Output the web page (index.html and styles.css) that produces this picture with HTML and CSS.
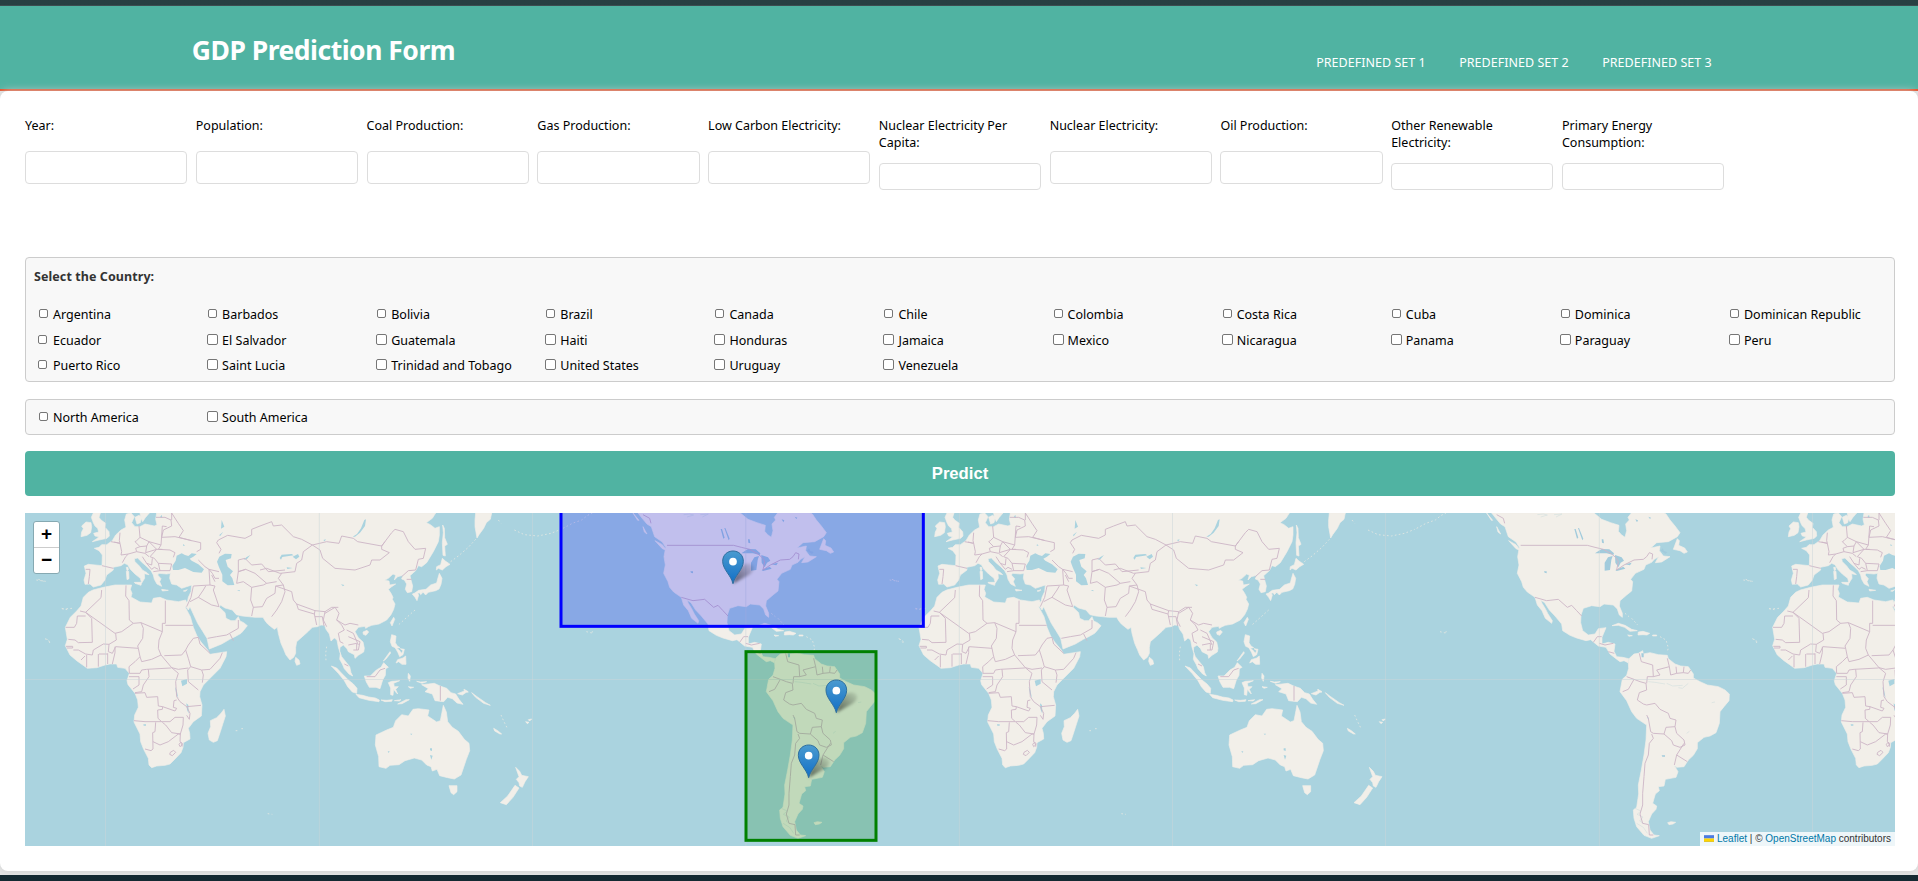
FILE: index.html
```html
<!DOCTYPE html>
<html lang="en">
<head>
<meta charset="utf-8">
<title>GDP Prediction Form</title>
<link rel="stylesheet" href="styles.css">
</head>
<body>
<div class="page">
<header class="header">
  <div class="header-inner">
    <h1 class="title">GDP Prediction Form</h1>
    <nav class="nav"><a>PREDEFINED SET 1</a><a>PREDEFINED SET 2</a><a>PREDEFINED SET 3</a></nav>
  </div>
</header>
<main class="container">
  <form class="form">
    <div class="fields">
      <div class="field"><label>Year:</label><input type="text"></div>
      <div class="field"><label>Population:</label><input type="text"></div>
      <div class="field"><label>Coal Production:</label><input type="text"></div>
      <div class="field"><label>Gas Production:</label><input type="text"></div>
      <div class="field"><label>Low Carbon Electricity:</label><input type="text"></div>
      <div class="field tall"><label>Nuclear Electricity Per<br>Capita:</label><input type="text"></div>
      <div class="field"><label>Nuclear Electricity:</label><input type="text"></div>
      <div class="field"><label>Oil Production:</label><input type="text"></div>
      <div class="field tall"><label>Other Renewable<br>Electricity:</label><input type="text"></div>
      <div class="field tall"><label>Primary Energy<br>Consumption:</label><input type="text"></div>
    </div>
    <section class="box countries">
      <h2 class="box-title">Select the Country:</h2>
      <div class="checks">
        <label><input type="checkbox">Argentina</label><label><input type="checkbox">Barbados</label><label><input type="checkbox">Bolivia</label><label><input type="checkbox">Brazil</label><label><input type="checkbox">Canada</label><label><input type="checkbox">Chile</label><label><input type="checkbox">Colombia</label><label><input type="checkbox">Costa Rica</label><label><input type="checkbox">Cuba</label><label><input type="checkbox">Dominica</label><label><input type="checkbox">Dominican Republic</label>
        <label><input type="checkbox">Ecuador</label><label><input type="checkbox">El Salvador</label><label><input type="checkbox">Guatemala</label><label><input type="checkbox">Haiti</label><label><input type="checkbox">Honduras</label><label><input type="checkbox">Jamaica</label><label><input type="checkbox">Mexico</label><label><input type="checkbox">Nicaragua</label><label><input type="checkbox">Panama</label><label><input type="checkbox">Paraguay</label><label><input type="checkbox">Peru</label>
        <label><input type="checkbox">Puerto Rico</label><label><input type="checkbox">Saint Lucia</label><label><input type="checkbox">Trinidad and Tobago</label><label><input type="checkbox">United States</label><label><input type="checkbox">Uruguay</label><label><input type="checkbox">Venezuela</label>
      </div>
    </section>
    <section class="box regions">
      <div class="checks">
        <label><input type="checkbox">North America</label><label class="big"><input type="checkbox">South America</label>
      </div>
    </section>
    <button class="predict" type="button">Predict</button>
  </form>
  <div class="map">
    <svg class="tiles" viewBox="0 9 5610 999" preserveAspectRatio="none">
      <defs>
        <g id="oldworld">
          <path class="land" d="M395,9 L1232,9 1222,25 1204,38 1216,44 1230,55 1243,50 1243,75 1240,95 1225,125 1205,158 1190,170 1180,167 1172,182 1165,188 1155,197 1158,210 1163,228 1160,245 1147,248 1141,238 1145,222 1138,210 1130,207 1134,196 1118,200 1108,210 1112,196 1104,192 1090,205 1079,211 1092,213 1094,225 1112,222 1100,230 1090,238 1098,250 1104,262 1102,268 1110,282 1106,298 1098,314 1085,330 1062,342 1040,346 1030,350 1022,355 1020,349 1000,352 990,365 1000,383 1014,396 1018,415 1016,426 1000,436 990,445 988,434 970,425 966,416 955,405 945,412 944,424 950,440 962,455 974,470 978,488 983,498 972,492 958,476 952,462 944,448 946,430 940,412 936,390 928,384 918,393 913,372 903,358 899,346 888,345 877,350 862,352 850,364 832,380 815,395 812,412 812,430 806,442 795,450 783,435 776,418 768,400 760,370 757,352 748,358 738,350 728,342 720,332 714,322 690,322 652,318 634,314 622,300 600,294 586,285 583,292 600,308 603,325 618,332 630,332 640,320 645,333 656,338 667,347 655,362 648,370 630,380 614,388 590,402 570,410 553,417 546,385 532,362 518,340 504,310 495,290 490,300 480,285 488,272 490,262 498,245 500,225 485,230 470,235 455,225 440,222 434,205 436,190 425,192 402,190 398,195 408,206 404,215 410,229 396,222 388,208 385,195 378,182 366,170 352,158 338,144 328,146 330,155 343,168 352,180 366,188 372,194 358,191 359,205 350,219 346,205 330,192 316,178 308,164 298,160 288,167 264,172 265,180 245,195 240,210 228,225 205,231 195,222 180,223 177,210 183,190 178,168 190,163 231,167 232,135 222,122 208,115 222,112 230,104 245,104 262,92 272,75 288,60 303,52 299,30 304,12 318,9 328,20 320,38 330,50 345,50 360,42 388,48 396,44 392,28Z"/>
          <path class="land" d="M204,240 L235,232 270,225 303,225 320,225 316,238 321,250 318,261 345,276 380,279 385,265 405,262 425,270 460,275 482,270 487,287 480,290 496,320 505,352 516,378 528,396 548,420 555,433 605,425 603,440 585,475 555,505 535,525 525,545 524,560 531,585 529,618 505,635 490,655 494,670 495,687 475,698 474,712 468,728 450,747 435,762 420,766 395,768 380,773 372,765 370,745 356,718 347,695 345,672 327,636 329,615 340,592 338,570 330,550 309,524 306,512 313,490 300,475 278,472 275,462 255,462 240,465 215,473 187,475 172,464 155,452 135,435 121,407 127,388 121,352 136,322 155,303 168,288 175,262 190,247Z"/>
          <path class="land" d="M597,598 L601,618 594,640 586,665 577,692 565,697 553,690 549,670 557,650 556,632 575,623 588,610Z"/>
          <path class="land" d="M205,9 L226,9 222,22 228,30 242,40 240,52 252,65 253,78 246,85 222,90 202,95 215,86 222,80 210,78 206,70 221,66 218,55 210,48 205,38 199,22Z"/>
          <path class="land" d="M183,36 L198,38 200,50 197,68 186,76 168,80 170,66 175,56 170,48Z"/>
          <path class="land" d="M330,22 l12,-6 8,6 -4,16 -10,4Z M345,9 h28 l-12,14 -8,12 -6,-14Z M304,184 l7,0 1,22 -6,3Z M304,172 l5,0 1,8 -4,2Z M328,217 l22,0 -2,9 -18,-6Z M410,238 l20,3 -18,2Z M475,243 l12,-4 -6,5Z"/>
          <path class="land" d="M812,442 l10,8 3,12 -10,4 -5,-12Z M1106,322 l3,6 -8,20 -5,-10Z M1014,366 l12,-5 5,5 -8,10 -8,-3Z"/>
          <path class="land" d="M1253,45 l5,10 1,28 8,20 -8,5 2,30 -7,-2 -2,-38 3,-30Z M1252,145 l9,8 14,10 -12,7 -11,10 -12,-5 -6,5 1,-10 12,-6Z M1243,190 l8,15 -3,18 -6,14 -10,5 -22,5 -8,8 -9,-10 -14,5 -8,-2 10,-7 22,-3 14,-13 18,-6 3,-12Z M1175,247 l6,8 -5,17 -6,-10 -8,-10Z M1183,247 l12,-1 -8,8Z"/>
          <path class="land" d="M1100,374 l13,4 -2,20 6,10 8,5 -10,2 -14,-6 -5,-14Z M1110,412 l12,8 8,10 4,-8 -8,-6 12,2 -4,16 -10,6 -5,-12Z M1142,438 l1,25 -12,0 -10,-8 -8,4 5,-10 16,-5Z M1095,425 l-20,28 8,-6 14,-18Z"/>
          <path class="land" d="M1076,458 l14,14 -8,4 -1,20 -8,14 -8,26 -12,-4 -20,0 -9,-16 -6,-18 18,0 18,-18 14,-8Z"/>
          <path class="land" d="M919,468 L935,474 952,492 970,510 985,522 996,535 995,550 982,546 968,530 958,512 940,490Z M993,553 l20,3 18,5 20,3 12,6 -1,5 -30,-4 -30,-8Z M1068,570 l18,1 16,-2 -2,5 -20,1Z M1108,572 l20,-3 -5,4Z M1118,582 l25,-13 10,0 -22,12Z"/>
          <path class="land" d="M1090,518 l10,-4 24,-2 -18,8 2,10 12,0 -8,8 6,14 -6,-6 -6,-8 -2,18 -7,-2 0,-20Z M1150,490 l6,8 -2,16 -5,-10Z M1150,530 l16,2 -10,3Z M1175,514 l12,2 18,-1 -14,5Z"/>
          <path class="land" d="M1190,524 L1210,522 1228,520 1245,528 1265,535 1278,548 1292,552 1302,568 1314,583 1296,579 1282,566 1268,562 1256,575 1230,572 1222,552 1200,545 1210,536Z M1298,551 l22,-9 8,2 -16,11Z M1318,538 l12,8 -4,1 -10,-7Z M1340,548 l16,12 26,18 14,8 -20,-6 -24,-18Z"/>
          <path class="land" d="M1255,586 L1264,606 1268,635 1282,652 1300,664 1318,688 1332,700 1334,722 1324,748 1308,795 1288,807 1268,803 1244,797 1236,778 1222,783 1218,770 1205,765 1190,750 1168,744 1140,752 1122,764 1095,766 1083,775 1062,770 1061,740 1051,705 1053,675 1085,660 1105,652 1112,632 1130,614 1150,618 1164,598 1180,596 1212,600 1208,618 1235,636 1246,632Z"/>
          <path class="land" d="M1272,827 l24,0 0,18 -10,9 -8,-6Z M1472,772 L1484,784 1490,796 1510,800 1500,815 1492,832 1484,828 1482,818 1474,808 1482,800Z M1470,826 L1482,834 1464,862 1444,884 1426,878 1448,858Z M1406,655 l12,7 12,10 -5,0 -16,-9Z M1502,635 l10,2 -5,4Z M1510,629 l10,-2 -6,6Z"/>
          <path class="land" d="M1352,9 L1400,9 1396,28 1384,38 1376,55 1362,74 1356,84 1350,50 1350,30Z"/>
          <path class="dots" d="M1352,88 L1330,112 1300,138 1270,160 M1420,30 l8,10 M1468,60 l30,14 40,4 40,-8 30,-12 M1428,615 l8,18 10,20 M728,911 l14,2 M632,662 l6,0 M649,656 l6,0 M905,410 l-3,20 1,22 M1170,300 L1120,345 M110,295 l20,5 M60,386 l20,12 M40,208 l22,8 M1684,365 l16,4"/>
          <path class="water" d="M480,135 L470,130 455,137 452,152 442,168 444,180 460,180 480,174 505,186 530,188 537,178 520,163 500,152 494,146 505,140 515,132 500,130 490,138Z"/>
          <path class="water" d="M583,140 L600,131 620,132 618,145 602,150 608,170 624,184 615,195 622,205 628,225 608,226 592,214 592,194 582,172 576,155Z"/>
          <path class="water" d="M983,80 L996,72 1008,55 1018,30 1023,28 1020,48 1005,68 990,80Z M764,144 l6,-10 30,-2 6,4 -34,5 -4,8Z M803,140 l16,-8 4,8 -10,8Z M468,512 l18,-5 0,14 -14,8Z M484,580 l6,5 1,26 -5,-12Z M450,530 l5,10 5,25 -6,-12Z M785,172 l18,2 -16,3Z M656,150 l8,-8 12,-7 -10,12Z M590,30 l8,20 -10,6Z M475,102 l5,5 -6,0Z M948,223 l10,2 -4,4Z M636,240 l8,0 0,4Z M895,90 l8,-2 -4,6Z M583,75 l12,-10 -10,14Z M405,22 l5,-8 2,10Z"/>
          <path class="water" d="M1215,715 l6,0 0,8 -6,-2Z M1215,735 l8,2 -4,12Z M355,643 h8 v4 h-7Z M1088,724 h6 l-3,5Z M1155,671 h7 l-3,4Z M486,425 l-2,14"/>
          <path class="border" d="M182,307 L165,303 M182,307 L228,263 230,240 M182,307 L270,370 290,365 325,340 313,330 312,272 302,258 303,226 M325,340 L348,338 412,365 412,340 421,340 421,272 M421,346 H504 M182,318 H157 L155,340 148,352 H122 M200,325 L202,397 160,398 150,390 130,388 M200,325 L182,307 M348,338 L355,355 353,385 338,408 340,415 M412,365 L402,390 400,415 408,435 380,448 350,455 345,440 340,415 272,410 262,430 250,425 252,403 235,402 205,420 202,435 182,432 160,420 145,420 M123,409 h20 l0,5 h-18 M272,370 L274,390 252,403 M270,410 V428 L262,462 M248,430 V462 M222,432 h26 M220,432 V470 M185,435 V472 M168,450 l12,-12 M345,440 L330,455 312,470 313,490 H345 L350,480 365,478 437,474 440,473 M408,435 L440,473 460,478 490,474 M418,437 L470,435 482,420 490,405 505,385 520,382 M482,420 L490,445 497,470 530,480 555,478 585,445 592,428 M497,470 L488,480 490,515 520,540 M530,480 L535,495 532,518 M520,382 L525,402 555,430 M440,473 L460,490 452,515 455,560 465,575 485,590 528,586 M330,550 L360,548 365,562 398,560 400,588 413,590 412,598 398,600 399,625 410,635 360,635 327,632 M370,478 L372,500 355,525 350,545 330,548 M312,500 h30 v25 l-18,12 M413,590 L450,603 455,595 445,592 447,572 455,570 M410,635 H435 L450,622 475,622 474,645 466,672 440,668 422,645 412,637 M392,637 L390,665 383,668 384,717 378,722 360,717 M384,695 L405,705 430,695 460,672 466,672 465,695 472,700 471,710 M436,727 l10,-6 6,6 -10,10 -8,-4Z M462,703 l5,-6 4,8 -6,5Z M485,590 l10,20 -2,18 -8,-12"/>
          <path class="border" d="M182,178 L195,178 193,200 190,222 M231,167 L265,175 M258,95 L285,100 290,125 288,135 310,132 335,125 360,130 372,140 M285,68 L283,92 285,100 M342,48 L345,82 335,92 330,95 345,110 365,108 372,95 408,105 412,48 M285,100 L268,96 M345,82 L372,95 M310,132 L302,140 292,158 M335,125 L332,115 345,110 M365,108 L362,128 M372,95 L395,118 362,128 M408,105 L400,118 395,118 375,140 388,145 400,160 440,162 M400,118 L435,120 450,128 445,142 M400,118 L412,118 M400,160 L405,182 385,185 M405,182 H435 L440,162 M352,140 L365,160 380,165 382,145 M365,160 L380,178 388,172 400,178 M393,22 L420,22 438,30 440,48 415,60 410,82 450,80 M440,30 V9 M412,48 L425,50 M440,9 L460,40 475,62 462,82 500,92 527,98 527,118 515,125 M500,92 L450,80 M520,150 L540,170 552,178 582,185 M552,178 L555,225 505,228 498,262 485,290 M555,225 L570,228 565,240 582,290 560,285 520,262 495,275 M520,262 L535,240 542,228 M552,178 L562,190 570,205 582,205 M560,195 l10,20 M582,130 L588,118 575,98 580,90 608,76 660,85 680,75 680,58 705,48 740,35 745,48 770,45 805,80 830,88 862,105 835,125 830,150 815,160 810,185 765,190 725,175 705,180 M862,105 L905,95 942,100 950,78 985,85 998,95 1070,108 1080,95 M862,105 L885,120 893,145 930,175 990,180 1035,165 1040,150 1065,150 1093,128 1070,118 1070,108 1100,68 1110,58 1135,65 1150,95 1170,118 1202,115 1195,145 1180,148 1172,180 1150,182 1130,200 M1145,208 h15 M640,150 V185 L662,178 690,190 725,220 755,215 M640,150 L660,145 680,165 710,162 730,185 780,180 M662,178 L640,185 635,220 M635,220 L655,215 680,232 715,225 725,220 M680,232 L677,270 685,292 680,318 M685,292 L712,290 725,265 750,250 752,228 775,225 760,205 770,190 M752,228 L800,245 805,270 815,282 870,302 900,305 920,292 940,292 M775,225 L780,245 770,275 755,300 740,320 M815,282 L820,298 868,312 870,302 M868,312 L875,345 M870,320 h22 l5,28 M900,305 L895,330 905,350 M900,310 L930,292 942,310 935,330 950,345 958,360 M935,330 L960,345 975,340 1000,345 M958,360 L940,370 945,395 955,400 M965,360 L985,370 1000,405 M970,380 L1005,395 1000,420 985,420 M970,405 l25,-5 0,20 M548,385 L575,380 605,375 640,355 640,330 M615,372 l10,20 M958,462 l12,6 M1025,500 L1050,500 1065,480 1080,475 M1246,528 V572"/>
        </g>
        <g id="newworld">
          <path class="land" d="M35,9 L50,28 62,42 75,50 85,80 108,96 118,112 113,140 117,165 112,190 125,215 130,232 142,246 165,262 172,285 186,302 196,325 215,340 217,332 204,312 196,296 186,280 182,270 194,278 208,300 225,318 245,342 248,362 270,376 290,384 318,392 332,389 355,408 378,412 390,432 408,446 420,455 432,452 444,458 446,446 428,442 410,440 402,424 405,402 385,397 366,402 366,382 370,372 378,353 355,356 345,372 325,375 308,362 302,338 303,315 310,295 335,287 360,290 372,282 400,285 412,297 418,315 427,322 427,310 418,288 420,272 440,255 455,243 458,215 452,208 466,190 492,178 497,165 515,157 523,148 536,140 526,158 545,156 570,140 550,138 538,122 540,108 512,114 530,98 565,95 592,80 600,68 585,48 570,30 558,12 552,9 454,9 444,22 448,30 437,42 440,62 435,82 424,74 415,64 417,46 392,38 365,28 342,9Z"/>
          <path class="land" d="M580,118 l12,-32 6,6 -2,14 18,8 8,12 -10,4 -12,-8Z M86,92 l22,12 14,18 -14,-6Z M50,50 l12,22 -8,-6Z M20,9 l18,22 -4,0Z"/>
          <path class="land" d="M396,347 L415,340 435,346 455,358 472,362 450,364 434,352 415,346Z M475,366 l14,-2 20,6 -8,5 -12,-1 -15,1Z M443,375 l14,2 -10,2Z M518,375 h12 v3 h-12Z"/>
          <path class="land" d="M445,458 L448,445 462,432 475,430 488,422 490,432 510,428 535,434 562,436 565,446 585,462 602,468 625,470 640,492 640,504 660,515 682,525 715,530 735,540 748,552 747,572 732,590 720,605 718,640 708,668 690,678 672,682 652,698 652,716 640,736 625,750 612,770 590,772 582,765 594,785 588,802 556,808 552,828 535,830 538,842 526,852 518,880 530,888 528,898 515,912 505,935 510,960 522,975 538,977 515,985 492,976 470,950 462,925 460,900 470,892 476,852 475,825 484,780 492,735 498,690 500,645 470,625 455,605 440,572 420,545 427,508 440,496 446,475Z M563,938 l10,-3 14,2 -8,5 -12,2Z"/>
          <path class="dots" d="M-190,55 l28,-15 28,-10 18,-14 14,-7 M435,310 l12,10 M455,325 l18,20 M540,380 l18,10 7,24 -4,14 M790,210 l28,4 M868,297 l30,-2 M820,386 l12,14 M-100,365 l-5,2"/>
          <path class="lake" d="M345,130 L365,117 388,118 402,130 400,135 380,130Z M384,142 L398,138 394,150 390,180 374,182 374,158Z M405,135 L425,142 432,152 422,158 415,172 406,158Z M406,180 L430,170 436,176 410,183Z M434,163 L455,158 450,166Z M192,184 l8,0 0,6 -6,-2Z M283,57 l4,0 8,26 -4,3Z M294,54 l3,0 13,32 -3,5Z M365,88 l5,0 2,12 -6,-2Z M545,736 h10 v4 h-8Z M484,430 h7 v12 h-6Z M501,620 l5,4 -1,5Z M466,28 l8,3 -3,6Z M505,20 l8,3 -3,4Z M548,115 l4,8 10,3 -5,6 -15,-10Z"/>
          <path class="faint" d="M172,14 l18,-2 12,3 -20,6 M222,14 l24,-2 -18,9 M625,520 l-18,15 -12,-2 M560,520 l18,8 30,-2 M505,515 l20,2 30,5 M695,578 l10,-2 M620,670 l8,-6 M465,895 l18,8 -12,10 18,8 -10,12 12,8 M470,940 l20,12 12,18"/>
          <path class="border" d="M122,106 H322 L345,112 370,118 395,132 410,145 415,155 410,180 432,165 462,150 490,148 500,140 508,128 518,132 516,148 M50,14 L70,25 74,40 M165,262 L200,272 235,268 262,292 275,286 290,302 305,318 M340,397 L352,380 365,380 M358,400 L375,405 400,400 M385,425 l18,5 M478,430 L484,455 518,465 520,500 540,495 530,480 568,470 562,445 M568,470 L572,495 590,490 588,470 M590,490 L610,488 612,470 M610,488 L625,490 632,480 M440,500 L462,508 445,538 428,545 M462,508 L480,515 498,520 500,540 478,548 472,570 490,582 500,585 525,580 540,598 565,610 570,625 588,630 585,650 558,652 552,672 520,670 512,665 505,625 500,615 M500,520 L502,500 520,500 M585,650 L590,670 612,690 615,705 600,712 580,705 575,692 552,672 M612,700 L590,735 583,765 M590,735 L622,755 M515,672 L520,685 508,700 505,735 495,760 492,800 488,850 488,885 480,912 488,940 506,944 508,975 520,975"/>
        </g>
        <g id="pin">
          <path class="pin-shadow" d="M0,0 L48,-27 C72,-42 64,-62 40,-60 C20,-57 8,-34 0,0Z"/>
          <path class="pin-body" d="M0,0 C-5,-24 -31,-43 -31,-67 C-31,-86 -17,-98 0,-98 C17,-98 31,-86 31,-67 C31,-43 5,-24 0,0Z"/>
          <circle cx="0" cy="-66" r="11.5" fill="#fff"/>
        </g>
        <linearGradient id="pinblue" x1="0" y1="0" x2="0" y2="1"><stop offset="0" stop-color="#4a9bd0"/><stop offset="1" stop-color="#126fc6"/></linearGradient>
        <linearGradient id="pinshade" x1="0" y1="1" x2="1" y2="0"><stop offset="0" stop-color="#000" stop-opacity=".55"/><stop offset="1" stop-color="#000" stop-opacity=".05"/></linearGradient>
        <filter id="soft" x="-30%" y="-30%" width="160%" height="160%"><feGaussianBlur stdDeviation="5"/></filter>
      </defs>
      <rect class="sea" x="0" y="9" width="5610" height="999"/>
      <use href="#newworld" x="-756"/><use href="#oldworld"/>
      <use href="#newworld" x="1804"/><use href="#oldworld" x="2561"/>
      <use href="#newworld" x="4365"/><use href="#oldworld" x="5122"/>
      <path class="grid" d="M0,508.500H5610 M241.500,9V1008 M883,9V1008 M1522.500,9V1008 M2162.500,9V1008 M2803,9V1008 M3442.500,9V1008 M4081.500,9V1008 M4723,9V1008 M5362.500,9V1008"/>
      <rect class="zone north" x="1608" y="-40" width="1087" height="389"/>
      <rect class="zone south" x="2163" y="425" width="390" height="566"/>
      <use href="#pin" x="2124" y="221"/><use href="#pin" x="2434" y="608"/><use href="#pin" x="2351" y="803"/>
    </svg>
    <div class="zoom"><span>+</span><span>−</span></div>
    <div class="credit"><svg class="flag" viewBox="0 0 12 8"><path fill="#4C7BE1" d="M0 0h12v4H0z"/><path fill="#FFD500" d="M0 4h12v3H0z"/><path fill="#E0BC00" d="M0 7h12v1H0z"/></svg><a>Leaflet</a> | © <a>OpenStreetMap</a> contributors</div>
  </div>
</main>
</div>
</body>
</html>
```
FILE: styles.css
```css
* { box-sizing: border-box; }
body { margin: 0; height: 881px; overflow: hidden; background: linear-gradient(#283f42, #142a32); font-family: "Noto Sans", "Open Sans", sans-serif; font-size: 13px; color: #000; }
.page { margin-top: 5px; height: 870px; border-top: 1px solid #3d4c50; background: #e6e7e7; overflow: hidden; }
.header { height: 85px; background: #50b3a2; border-bottom: 2px solid #e8491d; }
.header-inner { width: 80%; margin: 0 auto; display: flex; justify-content: space-between; }
.title { margin: 23px 0 0; font-size: 26.500px; line-height: 42px; font-weight: 700; color: #fff; letter-spacing: -0.5px; white-space: nowrap; }
.nav { display: flex; gap: 34px; padding: 46px 15px 0 0; color: #fff; font-size: 12.500px; line-height: 21px; letter-spacing: 0.03px; white-space: nowrap; }
.nav a { width: 109px; }
.container { position: relative; height: 780px; padding: 25px 23px 0 25px; background: #fff; border-radius: 8px; box-shadow: 0 0 8px #ccc; }
.fields { display: grid; grid-template-columns: repeat(11, 1fr); column-gap: 8.500px; height: 141px; align-items: start; }
.field { display: flex; flex-direction: column; letter-spacing: 0; line-height: 17px; white-space: nowrap; }
.field label { height: 35px; padding-top: 1px; font-size: 12.500px; }
.field input { width: 100%; height: 33px; border: 1px solid #ddd; border-radius: 4px; background: #fff; }
.field.tall label { height: 47px; }
.field.tall input { height: 27px; }
.box { border: 1px solid #ccc; border-radius: 4px; background: #f8f8f8; }
.countries { height: 125px; padding: 10px 0 0 8px; }
.box-title { margin: 0 0 16px; color: #333; font-size: 12.500px; line-height: 18px; letter-spacing: 0.08px; }
.checks { display: grid; grid-template-columns: repeat(11, 169.100px); grid-auto-rows: 25.500px; font-size: 12.500px; letter-spacing: 0; white-space: nowrap; }
.checks label { display: flex; align-items: center; }
.checks input { appearance: none; flex: none; width: 11px; height: 11px; margin: 0 4px 2px 4px; border: 1px solid #767676; border-radius: 2px; background: #fff; }
.checks label:nth-child(-n+11):not(.big) input, .checks label:nth-child(11n+1) input { width: 9px; height: 9px; margin: 0 5px 2px 5px; }
.checks label:nth-child(11n+1) input { margin: 0 6px 2px 4px; }
.regions { margin-top: 17px; height: 36px; padding: 5px 0 0 8px; }
.predict { display: block; width: 100%; height: 45px; margin: 16px 0 17px; padding: 0; border: 0; border-radius: 4px; background: #50b3a2; color: #fff; font: 700 16.670px "Liberation Sans", Arial, sans-serif; }
.map { position: relative; height: 333px; overflow: hidden; background: #aad3df; }
.tiles { display: block; width: 100%; height: 100%; }
.sea, .water { fill: #aad3df; }
.lake { fill: #a2cbdc; }
.land { fill: #f2efe9; stroke: #f2efe9; stroke-width: 2; stroke-linejoin: round; }
.dots { fill: none; stroke: #dce5e2; stroke-width: 3; stroke-dasharray: 5 7; }
.faint { fill: none; stroke: #d5e1e0; stroke-width: 2; }
.border { fill: none; stroke: #cdb7c7; stroke-width: 2.800; stroke-linejoin: round; }
.grid { fill: none; stroke: #c9d6d9; stroke-width: 3; opacity: .5; }
.zone { stroke-width: 9; fill-opacity: .2; }
.north { fill: #00f; stroke: #00f; }
.south { fill: green; stroke: green; }
.pin-shadow { fill: url(#pinshade); filter: url(#soft); }
.pin-body { fill: url(#pinblue); stroke: #2e6f9f; stroke-width: 3; }
.zoom { position: absolute; left: 8px; top: 8px; width: 27px; height: 53px; display: flex; flex-direction: column; background: #fff; border: 1px solid #86a9b2; border-radius: 3px; font: 700 19px/24px "Liberation Sans", Arial, sans-serif; text-align: center; }
.zoom span { height: 26px; }
.zoom span:first-child { border-bottom: 1px solid #ccc; }
.credit { position: absolute; right: 0; bottom: 0; width: 195px; height: 14px; padding-left: 4px; background: rgba(255,255,255,.8); color: #333; font: 10px/14px "Liberation Sans", Arial, sans-serif; white-space: nowrap; }
.credit a { color: #0078a8; }
.flag { width: 10px; height: 7px; margin-right: 3px; }
```
